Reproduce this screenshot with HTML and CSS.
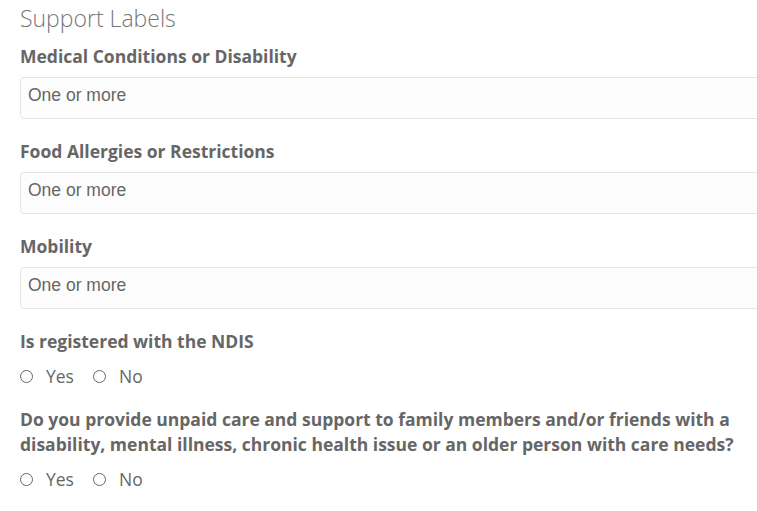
FILE: index.html
```html
<!DOCTYPE html>
<html lang="en">
<head>
  <meta charset="UTF-8">
  <title>Support Labels</title>
  <meta name="viewport" content="width=device-width, initial-scale=1.0">
  <link rel="stylesheet" href="styles.css">
</head>
<body>
  <section class="support">
    <h2>Support Labels</h2>

    <div class="field">
      <label>Medical Conditions or Disability</label>
      <input type="text" placeholder="One or more">
    </div>

    <div class="field">
      <label>Food Allergies or Restrictions</label>
      <input type="text" placeholder="One or more">
    </div>

    <div class="field">
      <label>Mobility</label>
      <input type="text" placeholder="One or more">
    </div>

    <div class="field">
      <label>Is registered with the NDIS</label>
      <div class="radios">
        <label class="radio"><input type="radio" name="ndis"> Yes</label>
        <label class="radio"><input type="radio" name="ndis"> No</label>
      </div>
    </div>

    <div class="field">
      <label>Do you provide unpaid care and support to family members and/or friends with a disability, mental illness, chronic health issue or an older person with care needs?</label>
      <div class="radios">
        <label class="radio"><input type="radio" name="carer"> Yes</label>
        <label class="radio"><input type="radio" name="carer"> No</label>
      </div>
    </div>
  </section>
</body>
</html>
```

FILE: styles.css
```css
html, body {
  margin: 0;
  background: #fff;
  overflow: hidden;
}

body {
  font-family: "Open Sans", sans-serif;
  color: #666;
  padding: 0 0 0 20px;
}

h2 {
  font-weight: 300;
  font-size: 23px;
  color: #777;
  margin: 4px 0 0;
  line-height: 28px;
}

.field {
  margin-top: 12px;
}

.field + .field {
  margin-top: 20px;
}

.field > label {
  display: block;
  font-weight: 700;
  font-size: 17.5px;
  line-height: 25px;
  color: #666;
  max-width: 725px;
}

.field input[type=text] {
  display: block;
  box-sizing: border-box;
  width: 760px;
  height: 42px;
  margin-top: 8px;
  padding: 0 7px 5px;
  border: 1px solid #e6e6e6;
  border-radius: 4px;
  background: #fdfdfd;
  font-family: "Liberation Sans", Arial, sans-serif;
  font-size: 17.5px;
  outline: none;
}

.field input[type=text]::placeholder {
  color: #666;
}

.radios {
  display: flex;
  gap: 19px;
  margin-top: 11px;
}

.radio {
  display: flex;
  align-items: center;
  gap: 13px;
  font-size: 17.5px;
  line-height: 22px;
  color: #666;
}

.radio input {
  appearance: none;
  width: 13px;
  height: 13px;
  margin: 0;
  border: 1px solid #666;
  border-radius: 50%;
  background: #fff;
}
```
